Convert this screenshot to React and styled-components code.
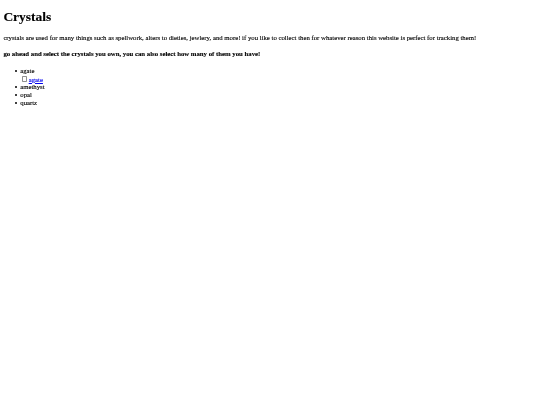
import styled, { createGlobalStyle } from 'styled-components'

const GlobalStyle = createGlobalStyle`
  body {
    margin: 0;
    background: #fff;
  }
`

const Page = styled.main`
  padding: 0 3.375px;
  display: flow-root;
  font-family: "Liberation Serif", "Times New Roman", serif;
  font-size: 6.75px;
  line-height: 7.76px;
  color: #000;
  -webkit-text-stroke: 0.12px #000;
  will-change: transform;
`

const Title = styled.h1`
  font-size: 13.5px;
  line-height: 15.53px;
  font-weight: bold;
  margin: 9.05px 0;
`

const Intro = styled.p`
  margin: 6.75px 0;
`

const Prompt = styled.h4`
  font-size: 6.75px;
  font-weight: bold;
  margin: 8.98px 0;
`

const CrystalList = styled.ul`
  margin: 6.75px 0;
  padding-left: 16.875px;
  list-style: none;
`

const CrystalItem = styled.li`
  position: relative;

  &::before {
    content: '';
    position: absolute;
    left: -5px;
    top: 2.9px;
    width: 2.1px;
    height: 2.1px;
    border-radius: 50%;
    background: #000;
  }
`

const CrystalOption = styled.div`
  display: block;

  & > input {
    appearance: none;
    box-sizing: border-box;
    width: 5.48px;
    height: 5.48px;
    margin: 1.27px 1.27px 0 1.69px;
    border: 0.5px solid #8f8f8f;
    border-radius: 0.8px;
    background: #fff;
    vertical-align: baseline;
  }

  & > a {
    color: #0000ee;
    -webkit-text-stroke: 0.12px #0000ee;
    text-decoration: underline;
  }
`

const crystals = [
    { name: 'agate', options: ['agate'] },
    { name: 'amethyst', options: [] },
    { name: 'opal', options: [] },
    { name: 'quartz', options: [] },
]

export default function App() {
    return (
        <Page>
            <GlobalStyle/>
            <Title>Crystals</Title>
            <Intro>
                crystals are used for many things such as spellwork, alters to dieties, jewlery, and more! if you like to collect then for whatever reason this website is perfect for tracking them!
            </Intro>
            <Prompt>go ahead and select the crystals you own, you can also select how many of them you have!</Prompt>
            <CrystalList>
                {crystals.map(crystal => (
                    <CrystalItem key={crystal.name}>
                        {crystal.name}
                        {crystal.options.map(option => (
                            <CrystalOption key={option}>
                                <input type="checkbox"/>
                                <a href={'#' + option}>{option}</a>
                            </CrystalOption>
                        ))}
                    </CrystalItem>
                ))}
            </CrystalList>
        </Page>
    )
}
